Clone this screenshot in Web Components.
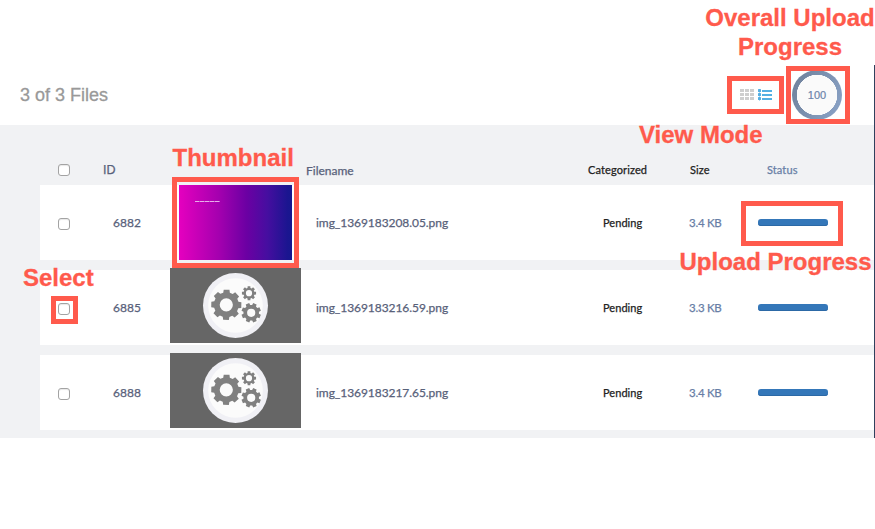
<!DOCTYPE html>
<html lang="en"><head><meta charset="utf-8"><title>Files</title>
<style>
html,body{margin:0;background:#fff}
body{width:875px;height:529px;overflow:hidden;position:relative;font-family:Lato,"Liberation Sans",sans-serif;font-size:12px}
</style></head><body>
<file-manager></file-manager>
<call-out style="left:727px;top:76px;width:57px;height:38px"></call-out>
<call-out style="left:786px;top:66px;width:64px;height:58px"></call-out>
<call-out style="left:172px;top:177px;width:127px;height:91px"></call-out>
<call-out style="left:51px;top:296px;width:27px;height:28px"></call-out>
<call-out style="left:741px;top:201px;width:102px;height:45px"></call-out>
<call-label style="left:700px;top:3px;width:180px">Overall Upload Progress</call-label>
<call-label style="left:639px;top:120px">View Mode</call-label>
<call-label style="left:172.5px;top:143px">Thumbnail</call-label>
<call-label style="left:23px;top:263px">Select</call-label>
<call-label style="left:679.5px;top:247px">Upload Progress</call-label>
<script>
function define(name, html, setup) {
  const t = document.createElement('template');
  t.innerHTML = html;
  customElements.define(name, class extends HTMLElement {
    connectedCallback() {
      if (this.shadowRoot) return;
      this.attachShadow({mode: 'open'}).append(t.content.cloneNode(true));
      if (setup) setup(this.shadowRoot, this);
    }
  });
}
function gear(cx, cy, r, root, hole, teeth, turn) {
  let d = '';
  const step = Math.PI * 2 / teeth;
  for (let i = 0; i < teeth; i++) {
    for (const [f, q] of [[-.34, root], [-.24, r], [.24, r], [.34, root]]) {
      const a = turn + (i + f) * step;
      d += (d ? 'L' : 'M') + (cx + q * Math.cos(a)).toFixed(2) + ' ' + (cy + q * Math.sin(a)).toFixed(2);
    }
  }
  return d + `ZM${cx - hole} ${cy}a${hole} ${hole} 0 1 0 ${hole * 2} 0a${hole} ${hole} 0 1 0 ${-hole * 2} 0Z`;
}
define('call-out', `<style>:host{position:absolute;box-sizing:border-box;border:5px solid #ff5a4c}</style>`);
define('call-label', `<style>:host{position:absolute;font:bold 24px/29px "Liberation Sans",Arial,sans-serif;color:#ff5a4c;text-align:center;-webkit-text-stroke:.3px #ff5a4c}:host(:not([style*=width])){white-space:nowrap}</style><slot></slot>`);
define('check-box', `<style>:host{display:block;box-sizing:border-box;width:12px;height:12px;border:1px solid #a3a3a3;border-radius:3px;background:#fff;box-shadow:inset 0 1px 1px #e8e8e8}</style>`);
define('progress-bar', `<style>:host{display:block;width:70px;height:7px;border-radius:3px;background:#3477b9;box-shadow:inset 0 -1px 0 #2c69a6}</style>`);
define('gear-thumb', `<style>:host{display:block;width:131px;height:75px;background:#666}svg{display:block}</style>
<svg width="131" height="75"><circle cx="65.5" cy="37.5" r="32.5" fill="#f0f0f5"/><circle cx="65.5" cy="37.5" r="27.3" fill="#fbfbfb"/>
<g fill="#808080" fill-rule="evenodd" stroke-linejoin="round"><path/><path/><path/></g></svg>`, s => {
  const p = s.querySelectorAll('path');
  p[0].setAttribute('d', gear(56.3, 36.8, 15.3, 12.5, 6.6, 8, 0.02));
  p[1].setAttribute('d', gear(79, 25.2, 7.2, 5.5, 3.1, 8, 0));
  p[2].setAttribute('d', gear(81.2, 44.8, 9.9, 7.8, 4.1, 8, .39));
});
define('color-thumb', `<style>:host{display:block;box-sizing:border-box;width:113px;height:75px;background:linear-gradient(90deg,#e500bf,#a500af 35%,#6b00a3 60%,#460ea0 78%,#1b1590 96%,#17178e);padding:16px 0 0 16px}i{display:block;width:25px;height:1px;background:repeating-linear-gradient(90deg,#e8aeea 0 4px,#c767d2 4px 5px)}</style><i></i>`);
define('view-switch', `<style>:host{display:block}svg{display:block}</style><svg width="32" height="12"></svg>`, s => {
  let m = '';
  for (const y of [0, 4, 8]) {
    for (const x of [0, 5, 10]) m += `<rect x="${x}" y="${y}" width="4" height="3" fill="#cecece"/>`;
    m += `<rect x="18" y="${y}" width="3" height="3" rx=".6" fill="#55afe3"/><rect x="22" y="${y + 1}" width="10" height="2" fill="#55afe3"/>`;
  }
  m += '<rect x="19" y="0" width="1" height="12" fill="#55afe3" opacity=".45"/>';
  s.querySelector('svg').innerHTML = m;
});
define('progress-ring', `<style>:host{display:grid;place-items:center;width:50px;height:50px;box-sizing:border-box;border-radius:50%;color:#6c83aa;font:11px/50px "Liberation Sans",Arial,sans-serif;-webkit-text-stroke:.2px;background:radial-gradient(circle,#fafafa 20px,transparent 20.5px),linear-gradient(115deg,#6e7f98,#8ba4c9)}</style><span><slot></slot></span>`);
define('file-row', `<style>
:host{display:grid;grid-template-columns:55px 57px 146px 287px 86px 69px 1fr;align-items:center;height:75px;background:#fff;padding-left:18px;color:#58617a;line-height:16px;-webkit-text-stroke:.25px}
.t{width:131px;display:grid;justify-items:center}check-box{margin-top:3px}
.n{letter-spacing:-.06px}.c{color:#222;font-size:11px;letter-spacing:.04px}.s{color:#687ea6;font-size:11.5px;letter-spacing:-.25px}
</style><check-box></check-box><span><slot name="id"></slot></span><div class="t"><slot name="thumb"></slot></div><span class="n"><slot name="name"></slot></span><span class="c">Pending</span><span class="s"><slot name="size"></slot></span><progress-bar></progress-bar>`);
define('table-head', `<style>
:host{display:grid;grid-template-columns:45px 203px 282px 102px 77px 1fr;align-items:center;height:60px;padding-left:18px;box-sizing:border-box;padding-top:29px;color:#58617a;line-height:16px;-webkit-text-stroke:.25px}
check-box{margin-top:1px}.i{font-family:"Liberation Sans",Arial,sans-serif;font-size:12.5px}.f{padding-top:2px}.c{color:#222;font-size:11px;letter-spacing:.12px}.s{color:#687ea6;font-size:11px;letter-spacing:.1px}
</style><check-box></check-box><span class="i">ID</span><span class="f">Filename</span><span class="c">Categorized</span><span class="c">Size</span><span class="s">Status</span>`);
define('file-manager', `<style>
:host{display:block;padding-top:65px}
main{border-right:1px solid #2f405d;height:373px}
header{display:flex;align-items:center;height:60px;box-sizing:border-box;padding:0 32px 0 20px}
h1{margin:0;flex:1;font:18px/20px "Liberation Sans",Arial,sans-serif;color:#999;-webkit-text-stroke:.3px}
view-switch{margin-right:20px}
section{background:#f1f2f4;height:313px;padding-left:40px;box-sizing:border-box;overflow:hidden}
.rows{display:grid;gap:10px}
gear-thumb{margin-top:-4px}
</style><main><header><h1>3 of 3 Files</h1><view-switch></view-switch><progress-ring>100</progress-ring></header>
<section><table-head></table-head><div class="rows">
<file-row><span slot="id">6882</span><color-thumb slot="thumb"></color-thumb><span slot="name">img_1369183208.05.png</span><span slot="size">3.4 KB</span></file-row>
<file-row><span slot="id">6885</span><gear-thumb slot="thumb"></gear-thumb><span slot="name">img_1369183216.59.png</span><span slot="size">3.3 KB</span></file-row>
<file-row><span slot="id">6888</span><gear-thumb slot="thumb"></gear-thumb><span slot="name">img_1369183217.65.png</span><span slot="size">3.4 KB</span></file-row>
</div></section></main>`);
</script></body></html>
